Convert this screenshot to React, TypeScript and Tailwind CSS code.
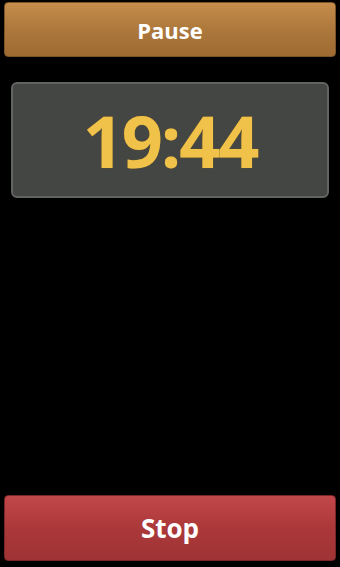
import React from "react";

const font = { fontFamily: '"Open Sans", "Noto Sans", "DejaVu Sans", sans-serif' };

export default function App(): JSX.Element {
  return (
    <div className="w-[340px] h-[567px] bg-black flex flex-col px-1 pt-[2px] pb-[6px]" style={font}>
      <button className="h-[55px] w-full rounded-[4px] border border-[#7a5426] bg-gradient-to-b from-[#c68d4b] via-[#ad783c] to-[#9f6b32] text-white font-bold text-[22px] leading-none">
        Pause
      </button>

      <div className="mx-[7px] mt-[25px] h-[116px] rounded-[6px] border-2 border-[#626462] bg-[#444644] flex items-center justify-center">
        <span className="text-[#f1c24a] font-bold text-[72px] leading-none tracking-[-0.03em] [text-shadow:0_0_1px_#8a6a20]">
          19:44
        </span>
      </div>

      <div className="flex-1" />

      <button className="h-[66px] w-full rounded-[4px] border border-[#7a2626] bg-gradient-to-b from-[#c2474a] via-[#ab383a] to-[#9f3335] text-white font-bold text-[26px] leading-none">
        Stop
      </button>
    </div>
  );
}
